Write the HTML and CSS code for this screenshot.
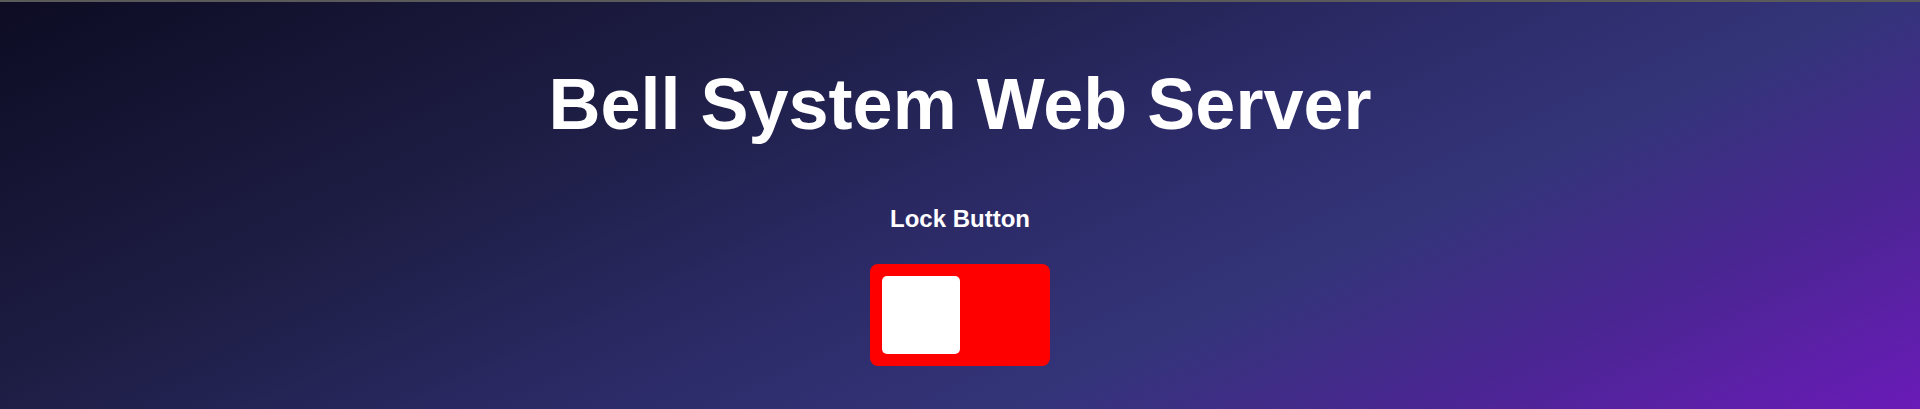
FILE: index.html
```html
<!DOCTYPE html>
<html lang="en">
<head>
<meta charset="utf-8">
<title>Bell System Web Server</title>
<link rel="stylesheet" href="styles.css">
</head>
<body>
  <div class="topline"></div>
  <main class="page">
    <h1 class="title">Bell System Web Server</h1>
    <h2 class="label">Lock Button</h2>
    <button class="toggle" type="button" aria-label="Lock Button"><span class="knob"></span></button>
  </main>
</body>
</html>
```

FILE: styles.css
```css
html, body {
  margin: 0;
  padding: 0;
}
body {
  height: 409px;
  overflow: hidden;
  font-family: "Liberation Sans", Arial, sans-serif;
  color: #ffffff;
  background: linear-gradient(155deg, #0d0c23 0%, #1e1e46 31%, #2c2b68 52%, #34347a 68%, #4a2692 82%, #6a1bb8 100%);
}
.topline {
  height: 2px;
  background: #5a5a5a;
}
.page {
  display: flex;
  flex-direction: column;
  align-items: center;
  padding-top: 62px;
}
.title {
  margin: 0 0 61px 0;
  font-size: 72px;
  line-height: 80px;
  font-weight: 700;
}
.label {
  margin: 0 0 31px 0;
  font-size: 24px;
  line-height: 28px;
  font-weight: 700;
}
.toggle {
  display: flex;
  align-items: flex-start;
  width: 180px;
  height: 102px;
  padding: 12px;
  border: none;
  border-radius: 8px;
  background: #ff0000;
  box-sizing: border-box;
  cursor: pointer;
}
.knob {
  display: block;
  width: 78px;
  height: 78px;
  border-radius: 5px;
  background: #ffffff;
}
```
